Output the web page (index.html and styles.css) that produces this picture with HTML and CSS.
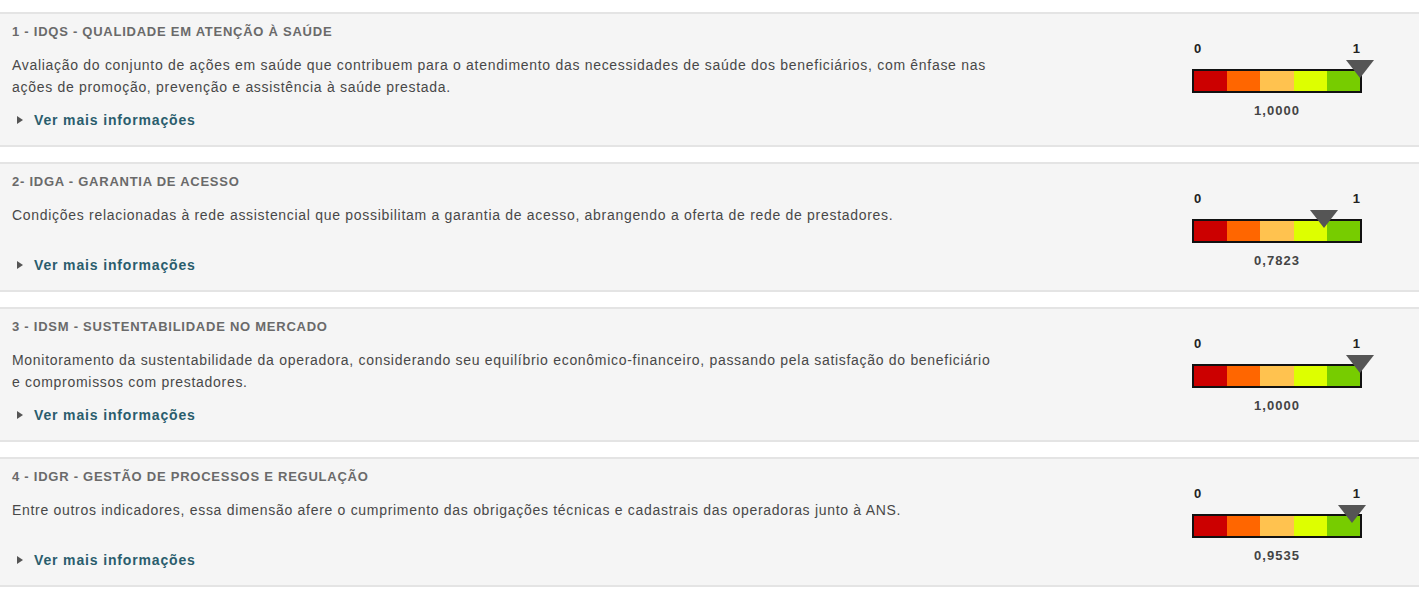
FILE: index.html
```html
<!DOCTYPE html>
<html lang="pt-BR">
<head>
    <meta charset="UTF-8">
    <meta name="viewport" content="width=device-width, initial-scale=1.0">
    <title>Dimensões IDSS</title>
    <link rel="stylesheet" href="styles.css">
</head>
<body>
    <div class="list">
        <div class="card">
            <div class="info">
                <h3 class="title">1 - IDQS - QUALIDADE EM ATENÇÃO À SAÚDE</h3>
                <p class="desc">Avaliação do conjunto de ações em saúde que contribuem para o atendimento das necessidades de saúde dos beneficiários, com ênfase nas ações de promoção, prevenção e assistência à saúde prestada.</p>
                <a class="more" href="#"><span class="arrow"></span>Ver mais informações</a>
            </div>
            <div class="gauge">
                <div class="scale"><span>0</span><span>1</span></div>
                <div class="bar">
                    <div class="seg s1"></div><div class="seg s2"></div><div class="seg s3"></div><div class="seg s4"></div><div class="seg s5"></div>
                    <div class="marker" style="left: 100%;"></div>
                </div>
                <div class="value">1,0000</div>
            </div>
        </div>

        <div class="card">
            <div class="info">
                <h3 class="title">2- IDGA - GARANTIA DE ACESSO</h3>
                <p class="desc">Condições relacionadas à rede assistencial que possibilitam a garantia de acesso, abrangendo a oferta de rede de prestadores.</p>
                <a class="more" href="#"><span class="arrow"></span>Ver mais informações</a>
            </div>
            <div class="gauge">
                <div class="scale"><span>0</span><span>1</span></div>
                <div class="bar">
                    <div class="seg s1"></div><div class="seg s2"></div><div class="seg s3"></div><div class="seg s4"></div><div class="seg s5"></div>
                    <div class="marker" style="left: 78.23%;"></div>
                </div>
                <div class="value">0,7823</div>
            </div>
        </div>

        <div class="card">
            <div class="info">
                <h3 class="title">3 - IDSM - SUSTENTABILIDADE NO MERCADO</h3>
                <p class="desc">Monitoramento da sustentabilidade da operadora, considerando seu equilíbrio econômico-financeiro, passando pela satisfação do beneficiário e compromissos com prestadores.</p>
                <a class="more" href="#"><span class="arrow"></span>Ver mais informações</a>
            </div>
            <div class="gauge">
                <div class="scale"><span>0</span><span>1</span></div>
                <div class="bar">
                    <div class="seg s1"></div><div class="seg s2"></div><div class="seg s3"></div><div class="seg s4"></div><div class="seg s5"></div>
                    <div class="marker" style="left: 100%;"></div>
                </div>
                <div class="value">1,0000</div>
            </div>
        </div>

        <div class="card">
            <div class="info">
                <h3 class="title">4 - IDGR - GESTÃO DE PROCESSOS E REGULAÇÃO</h3>
                <p class="desc">Entre outros indicadores, essa dimensão afere o cumprimento das obrigações técnicas e cadastrais das operadoras junto à ANS.</p>
                <a class="more" href="#"><span class="arrow"></span>Ver mais informações</a>
            </div>
            <div class="gauge">
                <div class="scale"><span>0</span><span>1</span></div>
                <div class="bar">
                    <div class="seg s1"></div><div class="seg s2"></div><div class="seg s3"></div><div class="seg s4"></div><div class="seg s5"></div>
                    <div class="marker" style="left: 95.35%;"></div>
                </div>
                <div class="value">0,9535</div>
            </div>
        </div>
    </div>
</body>
</html>
```

FILE: styles.css
```css
* {
    box-sizing: border-box;
    margin: 0;
    padding: 0;
}

body {
    font-family: "Liberation Sans", Arial, sans-serif;
    background-color: #fff;
    color: #444;
}

.list {
    padding-top: 12px;
    display: flex;
    flex-direction: column;
    gap: 15px;
}

.card {
    display: flex;
    justify-content: space-between;
    background-color: #f5f5f5;
    border-top: 2px solid #e4e4e4;
    border-bottom: 2px solid #e4e4e4;
    padding: 9px 12px 16px 12px;
}

.info {
    width: 984px;
}

.title {
    font-size: 13px;
    line-height: 18px;
    font-weight: bold;
    letter-spacing: 0.75px;
    color: #6a6a6a;
}

.desc {
    margin-top: 13px;
    font-size: 14px;
    line-height: 22px;
    min-height: 39px;
    letter-spacing: 0.7px;
    color: #484848;
}

.more {
    display: flex;
    align-items: center;
    margin-top: 13px;
    font-size: 14px;
    line-height: 18px;
    font-weight: bold;
    letter-spacing: 0.85px;
    color: #2a5d6d;
    text-decoration: none;
}

.arrow {
    width: 0;
    height: 0;
    margin: 0 11px 0 5px;
    border-left: 6px solid #555;
    border-top: 4px solid transparent;
    border-bottom: 4px solid transparent;
}

/* gauge on the right */
.gauge {
    width: 170px;
    margin-top: 18px;
    margin-right: 45px;
}

.scale {
    display: flex;
    justify-content: space-between;
    padding: 0 2px;
    font-size: 13px;
    line-height: 16px;
    font-weight: bold;
    color: #222;
}

.bar {
    position: relative;
    display: flex;
    height: 24px;
    margin-top: 12px;
    border: 2px solid #111;
}

.seg {
    flex: 1;
}

.s1 { background-color: #cc0000; }
.s2 { background-color: #ff6600; }
.s3 { background-color: #ffc24f; }
.s4 { background-color: #ddff00; }
.s5 { background-color: #77cc00; }

.marker {
    position: absolute;
    top: -11px;
    width: 0;
    height: 0;
    margin-left: -14px;
    border-left: 14px solid transparent;
    border-right: 14px solid transparent;
    border-top: 18px solid #555;
}

.value {
    margin-top: 10px;
    text-align: center;
    font-size: 13px;
    line-height: 16px;
    font-weight: bold;
    letter-spacing: 1px;
    color: #444;
}
```
